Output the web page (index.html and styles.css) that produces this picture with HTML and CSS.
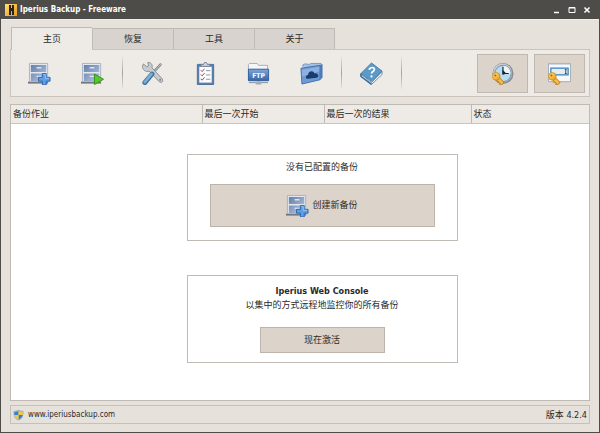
FILE: index.html
```html
<!DOCTYPE html>
<html lang="zh-CN">
<head>
<meta charset="utf-8">
<title>Iperius Backup - Freeware</title>
<link rel="stylesheet" href="styles.css">
</head>
<body>
<svg class="defs" aria-hidden="true">
  <defs>
    <linearGradient id="steel" x1="0" y1="0" x2="1" y2="1"><stop offset="0" stop-color="#6580aa"/><stop offset="1" stop-color="#b9c7df"/></linearGradient>
    <linearGradient id="blue" x1="0" y1="0" x2="0" y2="1"><stop offset="0" stop-color="#7fa6d6"/><stop offset="1" stop-color="#3465a8"/></linearGradient>
    <linearGradient id="gold" x1="0" y1="0" x2="1" y2="1"><stop offset="0" stop-color="#ffdf70"/><stop offset="1" stop-color="#e69a1c"/></linearGradient>
    <g id="cabinet">
      <path d="M0 20.500h21v2H0z" fill="#6b7078"/>
      <path d="M1.500 1.500h19v19h-19z" fill="#e3e8f0" stroke="#a9b3c4"/>
      <path d="M3 3h16v7.500H3zM3 12h16v8H3z" fill="url(#steel)"/>
      <path d="M9 6h5M9 15h5" stroke="#dbe4f2" stroke-width="1.500"/>
    </g>
    <g id="key">
      <path d="M4.500 4.500 11.500 12" stroke="#b9761a" stroke-width="4.500"/>
      <path d="M4.500 4.500 11 11.500" stroke="#f9be45" stroke-width="3"/>
      <path d="M7 9l-1.500 1.500M9 11l-1.500 1.500" stroke="#d08a1c" stroke-width="1.500"/>
      <circle cx="4.500" cy="4" r="4" fill="url(#gold)" stroke="#c9861f" stroke-width=".8"/>
      <circle cx="3.500" cy="3" r="1" fill="#a0661a"/>
    </g>
    <symbol id="cabinet-add" viewBox="0 0 24 24">
      <use href="#cabinet"/>
      <path d="M15 12h4v4h4v4h-4v4h-4v-4h-4v-4h4z" fill="#5c9fe6" stroke="#2c66b2"/>
      <path d="M16 13h2v4h4" fill="none" stroke="#9cc8f6"/>
    </symbol>
    <symbol id="cabinet-run" viewBox="0 0 24 24">
      <use href="#cabinet"/>
      <path d="M14 12.500 23.500 18 14 23.500z" fill="#58c82a" stroke="#30901a"/>
    </symbol>
  </defs>
</svg>
<div class="window">
  <header class="titlebar">
    <svg class="logo" viewBox="0 0 12 12" aria-hidden="true"><path d="M0 0h12v12H0z" fill="url(#gold)"/><path d="M4 1h5v10H7V7H6v4H4z" fill="#29251c"/><path d="M6 1h1v3H6z" fill="#f8c22e"/></svg>
    <h1>Iperius Backup - Freeware</h1>
    <div class="controls">
      <button aria-label="最小化"><svg viewBox="0 0 8 8"><path d="M1 6.500h5" stroke="#fff" stroke-width="1.500"/></svg></button>
      <button aria-label="最大化"><svg viewBox="0 0 8 8"><path d="M1 1.500h6v5H1zM1 2h6" fill="none" stroke="#fff"/></svg></button>
      <button aria-label="关闭"><svg viewBox="0 0 8 8"><path d="M1.500 1.500l5 5M6.500 1.500l-5 5" stroke="#fff" stroke-width="1.500"/></svg></button>
    </div>
  </header>
  <main>
    <nav class="tabs">
      <button class="tab active">主页</button>
      <button class="tab">恢复</button>
      <button class="tab">工具</button>
      <button class="tab">关于</button>
    </nav>
    <div class="toolbar">
      <button class="tool" aria-label="创建备份"><svg><use href="#cabinet-add"/></svg></button>
      <button class="tool" aria-label="运行备份"><svg><use href="#cabinet-run"/></svg></button>
      <span class="sep"></span>
      <button class="tool" aria-label="设置"><svg viewBox="0 0 24 24">
        <path d="M21 2 10 14" stroke="#7d8288" stroke-width="2.500"/><path d="M21.500 1.500 10 14" stroke="#c9cdd1"/>
        <path d="M2.500 2 6 5l2-1-1-3.500c3-.5 5.500 2 4.500 5.500L22 17.500c2 2.500-.5 5-3 3L8.500 9.500C5 11 1.500 8 1.500 4.500z" fill="#c8ccd0" stroke="#858b91"/>
        <path d="M11.500 12.500 4 21.500" stroke="#386f9c" stroke-width="5" stroke-linecap="round"/><path d="M11 12.500 4 21" stroke="#79aed1" stroke-width="3" stroke-linecap="round"/>
        <circle cx="20" cy="18.500" r="1" fill="#787f86"/></svg></button>
      <button class="tool" aria-label="报告"><svg viewBox="0 0 24 24">
        <path d="M3.500 2.500h17v21h-17z" fill="#5c7eaa" stroke="#4d6f9c"/><path d="M5.500 5h13v16.500h-13z" fill="#fbfbfd"/>
        <path d="M7.500 4.500v-2H10l1-2h2l1 2h2.500v2z" fill="#d2d6de" stroke="#78859a"/>
        <path d="M12.500 9H17M12.500 13.500H17M12.500 18H17" stroke="#8b95a8"/><path d="M7 8.500l1.500 1.500L11 7M7 13l1.500 1.500L11 11.500M7 17.500 8.500 19 11 16" fill="none" stroke="#ad3e3c"/></svg></button>
      <button class="tool" aria-label="FTP"><svg viewBox="0 0 24 24">
        <path d="M1.500 19V2.500l1-1h8l1.500 2h9.500V19z" fill="#f5f6f8" stroke="#a5abb6"/>
        <path d="M1.500 7.500h21v12h-21z" fill="url(#blue)" stroke="#315e9b"/>
        <text x="12" y="16.500" text-anchor="middle" class="ftp">FTP</text>
        <path d="M2 21.500h20M12 20v3" stroke="#858e9a"/><path d="M9 20.500h6v3H9z" fill="#a3abb5"/></svg></button>
      <button class="tool" aria-label="云"><svg viewBox="0 0 24 24">
        <path d="M3 5V3l2-1 5 .5 1-1h11v5" fill="#a5c1e4" stroke="#7796c2"/>
        <path d="M1 6.500 21 3.500v15L2 23z" fill="#6d99d4" stroke="#456fae"/><path d="M21 3.500 23.500 2v14.500L21 18.500z" fill="#4b77b8"/>
        <path d="M2 8 20 5v5L2 15z" fill="#a1c1e9" opacity=".6"/>
        <path d="M8.500 17.500c-3 .5-3-4 0-4 0-5 6-5 6.500-1.500 4-1 5.500 4 2.500 4.500z" fill="#183d6d"/></svg></button>
      <span class="sep"></span>
      <button class="tool" aria-label="帮助"><svg viewBox="0 0 24 24">
        <path d="M1 12.500 12 21.500 23 10v3L12.500 23 1 15z" fill="#f4f6f8" stroke="#678caa"/>
        <path d="M12 1 23 9.500 12 20 1 12z" fill="#5a9ac9" stroke="#4680ad"/><path d="M1 12v3l11 8.500" fill="none" stroke="#366f9d" stroke-width="1.500"/>
        <path d="M9.500 8c1-3 6-3 5.500 0-.3 2-3 2-3 4" fill="none" stroke="#fff" stroke-width="1.800"/><circle cx="12" cy="15" r="1.100" fill="#fff"/></svg></button>
      <span class="sep"></span>
      <div class="side">
        <button class="key-button" aria-label="计划许可"><svg viewBox="0 0 24 24">
          <circle cx="12.500" cy="12" r="11" fill="#868d94"/><circle cx="12" cy="11.500" r="10" fill="#c7ccd1"/><circle cx="12.500" cy="12" r="8.500" fill="#b5dcf3" stroke="#7e8d9a"/>
          <path d="M12.500 12V4a8 8 0 0 1 8 8z" fill="#edf5fa"/>
          <path d="M12.500 5v7h6" fill="none" stroke="#1d2329" stroke-width="1.200"/><path d="M12 8l4 4-4 1.500z" fill="#1d2329"/>
          <use href="#key" x="1" y="11"/></svg></button>
        <button class="key-button" aria-label="输入许可"><svg viewBox="0 0 24 24">
          <path d="M.5 1.500h23v19H.5z" fill="#f7f8fa" stroke="#a8acb2"/><path d="M1 2.500h22" stroke="#c5d3e3"/>
          <path d="M3 6.500h18v7H3z" fill="#e9ebee" stroke="#3184c0" stroke-width="1.300"/><path d="M18.500 8v4M17.500 8h2M17.500 12h2" stroke="#222" stroke-width=".8"/>
          <use href="#key" x="0" y="11"/></svg></button>
      </div>
    </div>
    <section class="jobs">
      <table>
        <colgroup><col class="c-job"><col class="c-start"><col class="c-result"><col></colgroup>
        <thead><tr><th>备份作业</th><th>最后一次开始</th><th>最后一次的结果</th><th>状态</th></tr></thead>
      </table>
      <div class="empty">
        <div class="card">
          <p>没有已配置的备份</p>
          <button class="action create"><svg><use href="#cabinet-add"/></svg>创建新备份</button>
        </div>
        <div class="card console">
          <h2>Iperius Web Console</h2>
          <p>以集中的方式远程地监控你的所有备份</p>
          <button class="action activate">现在激活</button>
        </div>
      </div>
    </section>
    <footer class="status">
      <svg class="shield" viewBox="0 0 12 12" aria-hidden="true"><path d="M6 0c2 1.200 3.500 1.500 5.500 1.500C12 7 10 10.500 6 12 2 10.500 0 7 .5 1.500 2.500 1.500 4 1.200 6 0z" fill="#a9b4bd"/><path d="M6 1.500V6H1.600L1.500 2.700C3.500 2.700 4.500 2.200 6 1.500zM6 6h4.400C10 8.500 8.500 10 6 11z" fill="#347fd0"/><path d="M6 1.500c1.500.7 2.500 1.200 4.500 1.200L10.400 6H6zM1.600 6H6v5C3.500 10 2 8.500 1.600 6z" fill="#f5cc30"/></svg>
      <a href="#">www.iperiusbackup.com</a>
      <span class="version">版本 4.2.4</span>
    </footer>
  </main>
</div>
</body>
</html>
```
FILE: styles.css
```css
* { box-sizing: border-box; }
body {
  margin: 0;
  color: #2b2a29;
  font: 9px/12px "DejaVu Sans Condensed", "Noto Sans CJK SC", sans-serif;
}
h1, h2, p { margin: 0; font-size: inherit; }
button { margin: 0; padding: 0; border: 0; background: none; color: inherit; font: inherit; }
svg { display: block; }
.defs { position: absolute; width: 0; height: 0; }
.window {
  display: flex;
  flex-direction: column;
  min-height: 100vh;
  border: 1px solid #4d4c48;
  border-top: 0;
  background: #e6e1db;
}
.titlebar {
  display: flex;
  align-items: center;
  height: 19px;
  padding: 0 8px 0 4px;
  background: #4d4c48;
  color: #fff;
}
.titlebar h1 { font-size: 8px; }
.logo { width: 12px; height: 12px; margin-right: 3px; }
.controls { display: flex; gap: 7px; margin-left: auto; }
.controls svg { width: 8px; height: 8px; }
main {
  display: flex;
  flex: 1;
  flex-direction: column;
  padding: 7px 9px 8px;
  border-top: 1px solid #f1eeea;
}
.tabs { display: flex; align-items: flex-end; padding-left: 1px; }
.tab {
  width: 81px;
  height: 21px;
  border: 1px solid #bfbab4;
  border-width: 1px 0 0 1px;
  background: #d8d3cf;
}
.tab:last-child { border-right-width: 1px; }
.tab.active {
  position: relative;
  height: 23px;
  margin-bottom: -1px;
  background: #eeebe7;
}
.toolbar {
  display: flex;
  align-items: center;
  height: 48px;
  padding: 0 4px 0 2px;
  border: 1px solid #c9c4be;
  background: #eeebe7;
}
.tool { display: grid; place-items: center; width: 53px; height: 38px; }
.tool svg, .key-button svg, .create svg { width: 23px; height: 23px; }
.sep {
  width: 1px;
  height: 32px;
  margin: 0 3px;
  background: linear-gradient(#e4e0dc, #a5a19c, #e4e0dc);
}
.ftp { fill: #fff; font-size: 7px; font-weight: bold; }
.side { display: flex; gap: 6px; margin-left: auto; }
.key-button {
  display: grid;
  place-items: center;
  width: 51px;
  height: 39px;
  border: 1px solid #c0b8b0;
  background: #dcd3ca;
}
.jobs {
  flex: 1;
  margin-top: 7px;
  border: 1px solid #bfbab4;
  background: #fff;
}
table { width: 100%; table-layout: fixed; border-collapse: collapse; }
th {
  height: 18px;
  padding: 0 2px;
  border-bottom: 1px solid #c9c4be;
  background: #eeebe7;
  font-weight: normal;
  text-align: left;
}
th + th { border-left: 1px solid #bfbab4; }
.c-job { width: 191px; }
.c-start { width: 122px; }
.c-result { width: 147px; }
.empty {
  display: flex;
  flex-direction: column;
  align-items: center;
  gap: 34px;
  padding: 30px 0 37px 44px;
}
.card {
  display: flex;
  flex-direction: column;
  align-items: center;
  width: 271px;
  padding: 6px 0 13px;
  border: 1px solid #c0bbb5;
}
.action {
  display: flex;
  align-items: center;
  justify-content: center;
  border: 1px solid #bcb3aa;
  background: #dcd3ca;
}
.create { gap: 3px; width: 225px; height: 43px; margin-top: 11px; }
.console { padding: 9px 0; }
.console p { margin-top: 2px; }
.activate { width: 125px; height: 26px; margin-top: 16px; }
.status {
  display: flex;
  align-items: center;
  height: 19px;
  margin-top: 4px;
  padding: 0 2px;
  border: 1px solid #c5c0ba;
}
.shield { width: 11px; height: 12px; margin-right: 4px; }
.status a { color: inherit; font-size: 8px; text-decoration: none; }
.version { margin-left: auto; }
```
